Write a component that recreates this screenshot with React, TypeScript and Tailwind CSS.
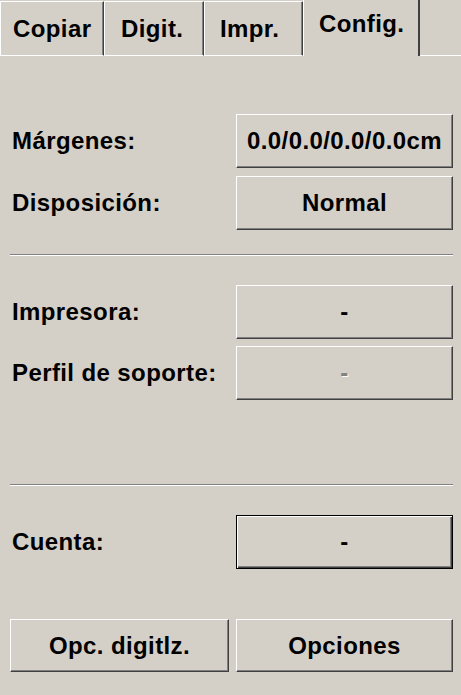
const Btn = ({ children, w = 'w-[217px]', h = 'h-[54px]', disabled = false, isDefault = false }: { children: React.ReactNode; w?: string; h?: string; disabled?: boolean; isDefault?: boolean }) => {
  const edge = isDefault
    ? 'border border-black shadow-[inset_1px_1px_0_#ffffff,inset_-1px_-1px_0_#404040,inset_-2px_-2px_0_#808080]'
    : 'border-t border-l border-white border-r border-b border-r-[#404040] border-b-[#404040] shadow-[inset_-1px_-1px_0_#808080]';
  return (
    <div className={`${w} ${h} ${edge} flex items-center justify-center bg-[#d4d0c8] shrink-0`}>
      <span className={disabled ? 'text-[#808080] [text-shadow:1px_1px_0_#ffffff]' : 'text-black'}>{children}</span>
    </div>
  );
};

const Row = ({ label, children, className = '' }: { label: string; children: React.ReactNode; className?: string }) => (
  <div className={`flex items-center ${className}`}>
    <div className="flex-1 pl-[2px]">{label}</div>
    {children}
  </div>
);

const Separator = ({ className = '' }: { className?: string }) => (
  <div className={`h-[2px] border-t border-t-[#808080] border-b border-b-white ${className}`} />
);

const tabs = [
  { label: 'Copiar', w: 'w-[104px]', pl: 'pl-[12px]' },
  { label: 'Digit.', w: 'w-[100px]', pl: 'pl-[16px]' },
  { label: 'Impr.', w: 'w-[99px]', pl: 'pl-[15px]' },
];

export default function App() {
  return (
    <div className="w-[461px] h-[695px] overflow-hidden bg-[#d4d0c8] text-black font-bold text-[24px] leading-none tracking-[0.4px] font-['Liberation_Sans',Arial,sans-serif]">
      {/* tab strip */}
      <div className="flex h-[56px] items-end">
        {tabs.map((t) => (
          <div
            key={t.label}
            className={`${t.w} ${t.pl} h-[55px] flex items-center border-l border-t border-b border-white border-r border-r-[#404040] shadow-[inset_-1px_0_0_#808080]`}
          >
            {t.label}
          </div>
        ))}
        <div className="w-[117px] h-[56px] pl-[15px] pb-[8px] flex items-center border-l border-white border-r-2 border-r-[#404040]">
          Config.
        </div>
        <div className="flex-1 h-[56px] border-b border-white" />
      </div>

      <div className="pl-[10px] pr-[8px]">
        <Row label="Márgenes:" className="mt-[58px]">
          <Btn>0.0/0.0/0.0/0.0cm</Btn>
        </Row>
        <Row label="Disposición:" className="mt-[8px]">
          <Btn>Normal</Btn>
        </Row>

        <Separator className="mt-[24px]" />

        <Row label="Impresora:" className="mt-[29px]">
          <Btn>-</Btn>
        </Row>
        <Row label="Perfil de soporte:" className="mt-[7px]">
          <Btn disabled>-</Btn>
        </Row>

        <Separator className="mt-[84px]" />

        <Row label="Cuenta:" className="mt-[29px]">
          <Btn isDefault>-</Btn>
        </Row>

        <div className="flex gap-[7px] mt-[50px]">
          <Btn w="w-[219px]" h="h-[53px]">Opc. digitlz.</Btn>
          <Btn h="h-[53px]">Opciones</Btn>
        </div>
      </div>
    </div>
  );
}
